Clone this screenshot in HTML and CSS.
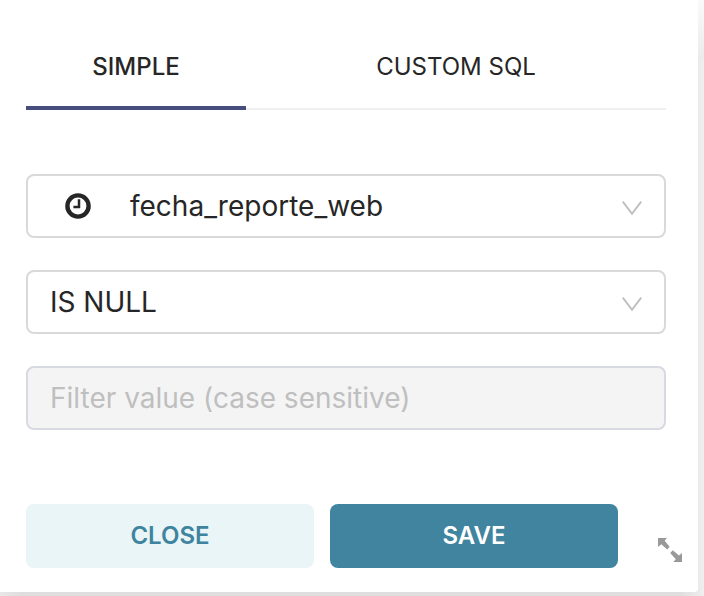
FILE: index.html
```html
<!DOCTYPE html>
<html lang="en">
<head>
<meta charset="utf-8">
<title>Filter</title>
<link rel="stylesheet" href="styles.css">
</head>
<body>
<main class="popover">
  <nav class="tabs">
    <a class="tab tab-active"><span class="label">SIMPLE</span></a>
    <a class="tab tab-sql"><span class="label">CUSTOM SQL</span></a>
  </nav>
  <div class="field">
    <svg class="clock" width="26" height="26" viewBox="0 0 26 26"><circle cx="13" cy="13" r="10.6" fill="none" stroke="currentColor" stroke-width="4.4"/><path d="M14 6.3V14H8.4" fill="none" stroke="currentColor" stroke-width="2.5"/></svg>
    <span class="value column">fecha_reporte_web</span>
    <svg class="chevron" width="20" height="14" viewBox="0 0 20 14"><path d="M.8.6 10 12.8 19.2.6" fill="none" stroke="currentColor" stroke-width="1.9"/></svg>
  </div>
  <div class="field">
    <span class="value operator">IS NULL</span>
    <svg class="chevron" width="20" height="14" viewBox="0 0 20 14"><path d="M.8.6 10 12.8 19.2.6" fill="none" stroke="currentColor" stroke-width="1.9"/></svg>
  </div>
  <div class="field field-disabled"><span class="value placeholder">Filter value (case sensitive)</span></div>
  <footer class="actions">
    <button class="button button-close"><span class="label">CLOSE</span></button>
    <button class="button button-save"><span class="label">SAVE</span></button>
    <svg class="resize" width="24" height="24" viewBox="0 0 24 24"><path d="M0 0H8.8L6.7 2.7 11.6 8.8 9.3 11.6 3.2 6.2 0 9ZM24 24H15.2L17.8 21.2 12.2 15 14.8 12.2 21 17.6 24 15Z" fill="currentColor"/></svg>
  </footer>
</main>
</body>
</html>
```
FILE: styles.css
```css
* { box-sizing: border-box; }
body {
  margin: 0;
  height: 596px;
  overflow: hidden;
  background: linear-gradient(90deg, #e8e8e8, #dedede 20px, #dedede 680px, #ebebeb 699px, #efefef);
  font-family: Inter, "Liberation Sans", sans-serif;
  color: #262626;
}
body::before {
  content: "";
  position: absolute;
  top: 0;
  right: 0;
  width: 6px;
  height: 60px;
  background: linear-gradient(#fafafa, #ebebeb);
}
.popover {
  position: relative;
  width: 698px;
  height: 592px;
  padding: 24px 32px 24px 26px;
  border-radius: 0 0 4px 0;
  background: #fff;
}
.tabs {
  display: flex;
  height: 86px;
  margin-bottom: 64px;
  box-shadow: inset 0 -2px #f0f0f0;
}
.tab {
  display: flex;
  justify-content: center;
  width: 220px;
  padding-top: 28px;
  font-size: 24px;
  line-height: 30px;
}
.tab-active { border-bottom: 4px solid #454e7c; font-weight: 500; }
.tab-sql { width: 420px; }
.field {
  display: flex;
  align-items: center;
  width: 640px;
  height: 64px;
  margin-bottom: 32px;
  padding: 0 22px;
  border: 2px solid #d9d9d9;
  border-radius: 8px;
  font-size: 28px;
}
.clock { margin: 0 39px 0 15px; }
.chevron { margin: 4px 0 0 auto; color: #bfbfbf; }
.field-disabled {
  margin-bottom: 74px;
  border-color: #d8dae1;
  background: #f4f4f4;
  color: #bfbfbf;
}
.actions { display: flex; gap: 16px; }
.button {
  width: 288px;
  height: 64px;
  padding: 0;
  border: 0;
  border-radius: 8px;
  font: 600 24px/64px Inter, "Liberation Sans", sans-serif;
}
.button-close { background: #e9f5f7; color: #3f849f; }
.button-save { background: #40849f; color: #fff; }
.resize { margin: 34px -16px 0 24px; flex: none; color: #999; }
```
